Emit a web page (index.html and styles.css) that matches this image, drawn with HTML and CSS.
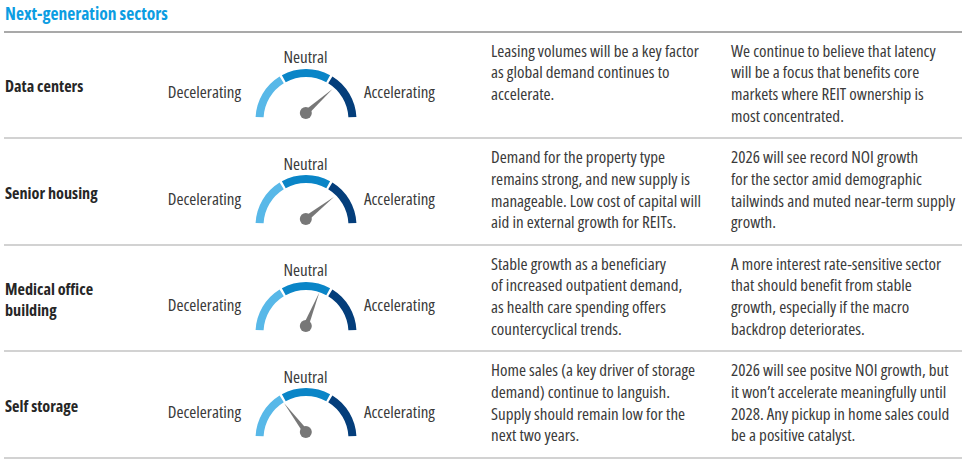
FILE: index.html
```html
<!DOCTYPE html>
<html lang="en">
<head>
<meta charset="utf-8">
<title>Next-generation sectors</title>
<link rel="stylesheet" href="styles.css">
</head>
<body>
<div class="page">
  <h1 class="title">Next-generation sectors</h1>

  <div class="row">
    <div class="label">Data centers</div>
    <div class="gauge-cell">
      <div class="neutral">Neutral</div>
      <div class="decel">Decelerating</div>
      <svg class="gauge" viewBox="0 0 104 56" width="104" height="56" aria-hidden="true">
        <path class="seg seg-low" d="M 5.6 49.1 A 46.5 46.5 0 0 1 27.7 11.9"/>
        <path class="seg seg-mid" d="M 29.8 10.7 A 46.5 46.5 0 0 1 74.2 10.7"/>
        <path class="seg seg-high" d="M 76.3 11.9 A 46.5 46.5 0 0 1 98.4 49.1"/>
        <g transform="translate(51.8 45) rotate(-42)">
          <polygon class="needle" points="0,-2.7 36,0 0,2.7"/>
        </g>
        <circle class="pivot" cx="51.8" cy="45" r="6"/>
      </svg>
      <div class="accel">Accelerating</div>
    </div>
    <p class="desc">Leasing volumes will be a key factor<br>as global demand continues to<br>accelerate.</p>
    <p class="desc">We continue to believe that latency<br>will be a focus that benefits core<br>markets where REIT ownership is<br>most concentrated.</p>
  </div>

  <div class="row">
    <div class="label">Senior housing</div>
    <div class="gauge-cell">
      <div class="neutral">Neutral</div>
      <div class="decel">Decelerating</div>
      <svg class="gauge" viewBox="0 0 104 56" width="104" height="56" aria-hidden="true">
        <path class="seg seg-low" d="M 5.6 49.1 A 46.5 46.5 0 0 1 27.7 11.9"/>
        <path class="seg seg-mid" d="M 29.8 10.7 A 46.5 46.5 0 0 1 74.2 10.7"/>
        <path class="seg seg-high" d="M 76.3 11.9 A 46.5 46.5 0 0 1 98.4 49.1"/>
        <g transform="translate(51.8 45) rotate(-38)">
          <polygon class="needle" points="0,-2.7 36,0 0,2.7"/>
        </g>
        <circle class="pivot" cx="51.8" cy="45" r="6"/>
      </svg>
      <div class="accel">Accelerating</div>
    </div>
    <p class="desc">Demand for the property type<br>remains strong, and new supply is<br>manageable. Low cost of capital will<br>aid in external growth for REITs.</p>
    <p class="desc">2026 will see record NOI growth<br>for the sector amid demographic<br>tailwinds and muted near-term supply<br>growth.</p>
  </div>

  <div class="row">
    <div class="label">Medical office<br>building</div>
    <div class="gauge-cell">
      <div class="neutral">Neutral</div>
      <div class="decel">Decelerating</div>
      <svg class="gauge" viewBox="0 0 104 56" width="104" height="56" aria-hidden="true">
        <path class="seg seg-low" d="M 5.6 49.1 A 46.5 46.5 0 0 1 27.7 11.9"/>
        <path class="seg seg-mid" d="M 29.8 10.7 A 46.5 46.5 0 0 1 74.2 10.7"/>
        <path class="seg seg-high" d="M 76.3 11.9 A 46.5 46.5 0 0 1 98.4 49.1"/>
        <g transform="translate(51.8 45) rotate(-68)">
          <polygon class="needle" points="0,-2.7 36,0 0,2.7"/>
        </g>
        <circle class="pivot" cx="51.8" cy="45" r="6"/>
      </svg>
      <div class="accel">Accelerating</div>
    </div>
    <p class="desc">Stable growth as a beneficiary<br>of increased outpatient demand,<br>as health care spending offers<br>countercyclical trends.</p>
    <p class="desc">A more interest rate-sensitive sector<br>that should benefit from stable<br>growth, especially if the macro<br>backdrop deteriorates.</p>
  </div>

  <div class="row">
    <div class="label">Self storage</div>
    <div class="gauge-cell">
      <div class="neutral">Neutral</div>
      <div class="decel">Decelerating</div>
      <svg class="gauge" viewBox="0 0 104 56" width="104" height="56" aria-hidden="true">
        <path class="seg seg-low" d="M 5.6 49.1 A 46.5 46.5 0 0 1 27.7 11.9"/>
        <path class="seg seg-mid" d="M 29.8 10.7 A 46.5 46.5 0 0 1 74.2 10.7"/>
        <path class="seg seg-high" d="M 76.3 11.9 A 46.5 46.5 0 0 1 98.4 49.1"/>
        <g transform="translate(51.8 45) rotate(-127)">
          <polygon class="needle" points="0,-2.7 36,0 0,2.7"/>
        </g>
        <circle class="pivot" cx="51.8" cy="45" r="6"/>
      </svg>
      <div class="accel">Accelerating</div>
    </div>
    <p class="desc">Home sales (a key driver of storage<br>demand) continue to languish.<br>Supply should remain low for the<br>next two years.</p>
    <p class="desc">2026 will see positve NOI growth, but<br>it won’t accelerate meaningfully until<br>2028. Any pickup in home sales could<br>be a positive catalyst.</p>
  </div>
</div>
</body>
</html>
```

FILE: styles.css
```css
html, body {
  margin: 0;
  padding: 0;
  background: #ffffff;
}

body {
  font-family: "Open Sans", "Roboto", sans-serif;
  font-stretch: 75%;
  color: #3a3a3a;
  font-size: 17px;
}

.page {
  width: 958px;
  padding: 0 4px;
}

.title {
  margin: 0;
  padding: 2.2px 0 6.8px 1px;
  font-size: 17.5px;
  line-height: 22px;
  font-weight: bold;
  color: #0c9de2;
  border-bottom: 2px solid #a9a9a9;
}

.row {
  display: grid;
  grid-template-columns: 156px 331px 240px 1fr;
  height: 104.5px;
  border-bottom: 2px solid #d2d2d2;
}

.label {
  align-self: center;
  padding: 3px 0 0 1px;
  font-weight: bold;
  font-size: 16.2px;
  line-height: 21px;
  color: #262626;
}

.gauge-cell {
  display: grid;
  grid-template-columns: 93.5px 104px auto;
  grid-template-rows: 20.5px 56px;
  padding-top: 14.4px;
  align-self: start;
}

.neutral {
  grid-column: 2;
  grid-row: 1;
  text-align: center;
  line-height: 20px;
}

.decel {
  grid-column: 1;
  grid-row: 2;
  text-align: right;
  line-height: 20px;
  margin-top: 14.2px;
  padding-right: 12.5px;
  white-space: nowrap;
}

.accel {
  grid-column: 3;
  grid-row: 2;
  line-height: 20px;
  margin-top: 14.2px;
  margin-left: 6.5px;
  white-space: nowrap;
}

.gauge {
  grid-column: 2;
  grid-row: 2;
  display: block;
}

.seg {
  fill: none;
  stroke-width: 8;
}

.seg-low { stroke: #58b8e8; }
.seg-mid { stroke: #0a85c7; }
.seg-high { stroke: #043e7b; }

.needle, .pivot {
  fill: #777777;
}

.desc {
  margin: 0;
  padding-top: 6.7px;
  line-height: 21.7px;
  white-space: nowrap;
}
```
